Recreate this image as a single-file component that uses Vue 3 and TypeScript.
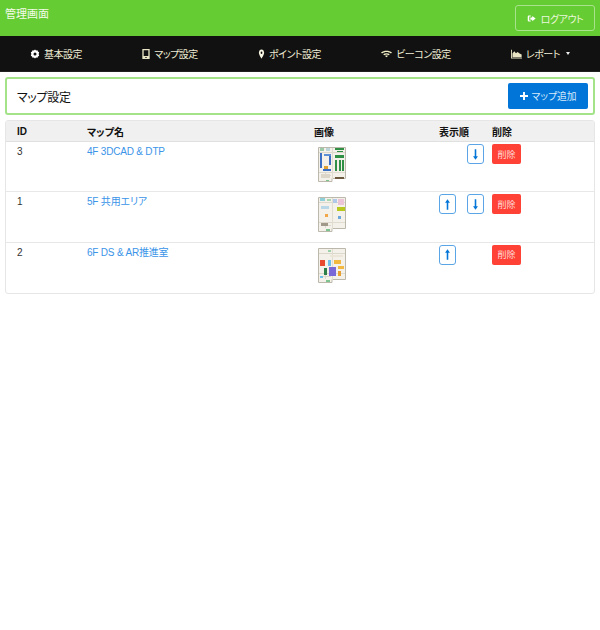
<script setup lang="ts">
interface Block { x: number; y: number; w: number; h: number; c: string }
interface MapRow { id: number; name: string; up: boolean; down: boolean; blocks: Block[] }
const b = (x: number, y: number, w: number, h: number, c: string): Block => ({ x, y, w, h, c })
const navItems = [
  { label: '基本設定', icon: 'gear', width: 10 },
  { label: 'マップ設定', icon: 'book', width: 8 },
  { label: 'ポイント設定', icon: 'pin', width: 7 },
  { label: 'ビーコン設定', icon: 'wifi', width: 11 },
  { label: 'レポート', icon: 'chart', width: 11 },
]
const walls: Block[] = [
  b(1,5,26,1,'#dcd8cc'),b(14,1,1,31,'#e0dcd0'),b(1,25,13,1,'#dcd8cc'),b(15,25,12,1,'#e0dcd0'),b(3,28,10,1,'#dcd8cc'),b(7,26,1,5,'#dcd8cc'),
]
const rows: MapRow[] = [
  { id: 3, name: '4F 3DCAD & DTP', up: false, down: true, blocks: [
    b(2,1,4,3,'#9cc9a8'),b(8,1,4,3,'#bcd4d8'),b(17,1,9,2,'#2f8f45'),b(19,4,6,1,'#2f8f45'),
    b(2,6,2,15,'#3a6fc4'),b(6,7,7,2,'#5d8fd4'),b(11,9,2,9,'#3a6fc4'),b(6,19,4,3,'#e0a030'),b(5,22,8,2,'#3a6fc4'),
    b(17,8,9,3,'#2f8f45'),b(17,13,2,11,'#2f8f45'),b(21,13,2,11,'#2f8f45'),b(24,13,2,11,'#2f8f45'),
    b(3,27,9,4,'#dcd6c8'),b(17,30,9,2,'#6b5a40'),b(8,33,3,1,'#7fc48f'),
  ] },
  { id: 1, name: '5F 共用エリア', up: true, down: true, blocks: [
    b(2,1,5,3,'#8fd0d8'),b(9,2,4,2,'#a8d8b0'),b(15,2,4,4,'#b0c8ea'),b(20,2,6,6,'#ecc4d8'),
    b(19,10,8,4,'#b8c81e'),b(3,9,8,3,'#b8d8ea'),b(7,17,3,3,'#f2a848'),b(20,19,3,3,'#6ca8dc'),
    b(3,26,7,3,'#a09888'),b(8,32,4,2,'#7fc48f'),
  ] },
  { id: 2, name: '6F DS & AR推進室', up: true, down: false, blocks: [
    b(10,2,3,2,'#9cd0a8'),b(12,7,13,2,'#ece6d8'),
    b(2,12,5,6,'#e84a30'),b(6,20,3,7,'#2f7f4a'),b(10,12,3,6,'#70c0e8'),b(16,12,7,4,'#f2b840'),
    b(11,19,7,9,'#7a68d8'),b(20,18,6,3,'#f2b840'),b(20,23,3,5,'#e8a030'),b(2,28,3,2,'#70c0e8'),b(8,32,4,2,'#7fc48f'),
  ] },
]
</script>

<template>
  <div class="page">
    <header class="top">
      <h1 class="brand">管理画面</h1>
      <button class="logout">
        <svg class="ico" viewBox="0 0 12 12" width="9" height="9">
          <path d="M5 2H2.5A1.5 1.5 0 0 0 1 3.5v5A1.5 1.5 0 0 0 2.5 10H5V8.6H3V3.4H5Z" fill="#fff" />
          <path d="M7 2.5 11.5 6 7 9.5V7.5H4.5V4.5H7Z" fill="#fff" />
        </svg>
        ログアウト
      </button>
    </header>
    <nav class="nav">
      <a v-for="item in navItems" :key="item.label" class="nav-item">
        <svg class="ico" viewBox="0 0 12 12" preserveAspectRatio="none" :width="item.width" height="10">
          <g v-if="item.icon === 'gear'">
            <path fill="#fff" fill-rule="evenodd" d="M6 .6 7.3 1.8 9 1.5 9.5 3.1 11 4 10.4 6 11 8 9.5 8.9 9 10.5 7.3 10.2 6 11.4 4.7 10.2 3 10.5 2.5 8.9 1 8 1.6 6 1 4 2.5 3.1 3 1.5 4.7 1.8ZM6 4.2A1.8 1.8 0 1 0 6 7.8 1.8 1.8 0 1 0 6 4.2Z" />
          </g>
          <g v-else-if="item.icon === 'book'">
            <path fill="#e8e4c4" fill-rule="evenodd" d="M.5 0H11.5V12H.5ZM2.5 1.5V8.5H9.5V1.5ZM5 9.5V10.8H7V9.5Z" />
          </g>
          <g v-else-if="item.icon === 'pin'">
            <path fill="#f8f6e4" fill-rule="evenodd" d="M6 .5A4.5 4.5 0 0 0 1.5 4.5C1.5 7 6 11.5 6 11.5S10.5 7 10.5 4.5A4.5 4.5 0 0 0 6 .5ZM6 3A1.5 1.5 0 1 1 6 6 1.5 1.5 0 1 1 6 3Z" />
          </g>
          <g v-else-if="item.icon === 'wifi'">
            <path fill="#f3f0c8" d="M0 4.2C3.2 1.2 8.8 1.2 12 4.2L10.8 5.4C8.2 3 3.8 3 1.2 5.4ZM2.4 6.4C4.4 4.6 7.6 4.6 9.6 6.4L8.4 7.6C7 6.4 5 6.4 3.6 7.6ZM4.4 8.4C5.4 7.6 6.6 7.6 7.6 8.4L6 10Z" />
          </g>
          <g v-else>
            <path fill="#e8e4c4" d="M0 1H1V10.5H12V11.5H0ZM1.6 9.9V5.5L3.6 2.6 5.4 5 7.2 3.6 9.4 5.4 11.6 6.6V9.9Z" />
          </g>
        </svg>
        <span>{{ item.label }}</span>
        <span v-if="item.icon === 'chart'" class="caret"></span>
      </a>
    </nav>
    <main class="content">
      <section class="title-panel">
        <h2 class="title">マップ設定</h2>
        <button class="add">
          <svg class="ico" viewBox="0 0 10 10" width="8" height="8"><path d="M3.8 0H6.2V3.8H10V6.2H6.2V10H3.8V6.2H0V3.8H3.8Z" fill="#fff" /></svg>
          マップ追加
        </button>
      </section>
      <section class="table">
        <div class="row head">
          <div>ID</div><div>マップ名</div><div>画像</div><div>表示順</div><div>削除</div>
        </div>
        <div v-for="row in rows" :key="row.id" class="row body">
          <div class="cell-id">{{ row.id }}</div>
          <div class="cell-name"><a class="link">{{ row.name }}</a></div>
          <div class="thumb-cell">
            <svg class="thumb" viewBox="0 0 28 35" width="28" height="35">
              <path d="M.5.5H27.5V31.5H14V34.5H.5Z" fill="#f4f1ea" stroke="#bdb8ac" />
              <rect v-for="(k, i) in walls" :key="'w' + i" :x="k.x" :y="k.y" :width="k.w" :height="k.h" :fill="k.c" />
              <rect v-for="(k, i) in row.blocks" :key="i" :x="k.x" :y="k.y" :width="k.w" :height="k.h" :fill="k.c" />
            </svg>
          </div>
          <div class="order">
            <button v-if="row.up" class="arrow">
              <svg viewBox="0 0 8 14" width="7" height="13"><path d="M3.1 13V5H1.2L4 1 6.8 5H4.9V13Z" fill="#0275d8" /></svg>
            </button>
            <span v-else class="arrow-gap"></span>
            <button v-if="row.down" class="arrow">
              <svg viewBox="0 0 8 14" width="7" height="13"><path d="M3.1 1V9H1.2L4 13 6.8 9H4.9V1Z" fill="#0275d8" /></svg>
            </button>
          </div>
          <div><button class="del">削除</button></div>
        </div>
      </section>
    </main>
  </div>
</template>

<style scoped>
.page {
  width: 600px;
  font-family: "Liberation Sans", "Noto Sans CJK JP", sans-serif;
  font-size: 10px;
  color: #333;
  font-feature-settings: "palt";
}
.top {
  height: 36px;
  background: #66cc33;
  display: flex;
  justify-content: space-between;
  padding: 5px 5px 0 5px;
  box-sizing: border-box;
}
.brand {
  margin: 2px 0 0;
  font-size: 11px;
  font-weight: 400;
  line-height: 14px;
  color: #f4fbe8;
}
.logout {
  width: 80px;
  height: 26px;
  border: 1px solid #a8e28c;
  border-radius: 3px;
  background: transparent;
  color: #eaf8dd;
  font: inherit;
  font-feature-settings: "palt";
  letter-spacing: -0.4px;
  display: flex;
  align-items: center;
  justify-content: center;
  gap: 5px;
  padding: 0;
}
.ico { flex: none; }
.nav {
  height: 35px;
  background: #111;
  display: flex;
  justify-content: space-around;
  border-bottom: 1px solid #222;
}
.nav-item {
  display: flex;
  align-items: center;
  gap: 4px;
  color: #eeecd4;
  letter-spacing: -0.5px;
}
.caret {
  width: 0;
  height: 0;
  margin-left: 2px;
  border-left: 2px solid transparent;
  border-right: 2px solid transparent;
  border-top: 3px solid #eee;
}
.content {
  padding: 5px 5px 0;
}
.title-panel {
  height: 38px;
  box-sizing: border-box;
  border: 2px solid #a4e38a;
  border-radius: 3px;
  display: flex;
  align-items: center;
  justify-content: space-between;
  padding: 0 5px 0 10px;
}
.title {
  margin: 0;
  font-size: 12px;
  font-weight: 400;
  letter-spacing: -0.3px;
  color: #111;
}
.add {
  width: 80px;
  height: 26px;
  background: #0275d8;
  border: 0;
  border-radius: 2px;
  color: #d8ebfb;
  font: inherit;
  font-size: 9.75px;
  font-feature-settings: "palt";
  display: flex;
  align-items: center;
  justify-content: center;
  gap: 4px;
  padding: 0;
}
.table {
  margin-top: 5px;
  border: 1px solid #e6e6e6;
  border-radius: 3px;
}
.row {
  display: grid;
  grid-template-columns: 70px 227px 125px 53px 1fr;
  padding-left: 11px;
}
.head {
  height: 21px;
  background: #f0f0f0;
  border-bottom: 1px solid #e0e0e0;
  box-sizing: border-box;
  align-items: center;
  font-weight: 700;
  color: #111;
}
.body {
  height: 50.33px;
  box-sizing: border-box;
  border-bottom: 1px solid #e8e8e8;
  padding-top: 2px;
}
.body:last-child { border-bottom: 0; }
.cell-id, .cell-name { padding-top: 2px; line-height: 12px; }
.link {
  color: #3a94e8;
  display: block;
  letter-spacing: -0.2px;
}
.thumb-cell { padding: 3px 0 0 4px; }
.thumb { display: block; filter: blur(0.35px); }
.order {
  display: flex;
  gap: 11px;
}
.arrow, .arrow-gap {
  width: 17px;
  height: 20px;
  box-sizing: border-box;
}
.arrow {
  background: #fff;
  border: 1px solid #5aa5e6;
  border-radius: 3px;
  padding: 0;
  display: flex;
  align-items: center;
  justify-content: center;
}
.del {
  width: 29px;
  height: 20px;
  background: #ff4136;
  border: 0;
  border-radius: 2px;
  color: #ffd9d6;
  font: inherit;
  font-size: 9px;
  padding: 0;
}
</style>

<style>
html, body { background: #fff; }
</style>
